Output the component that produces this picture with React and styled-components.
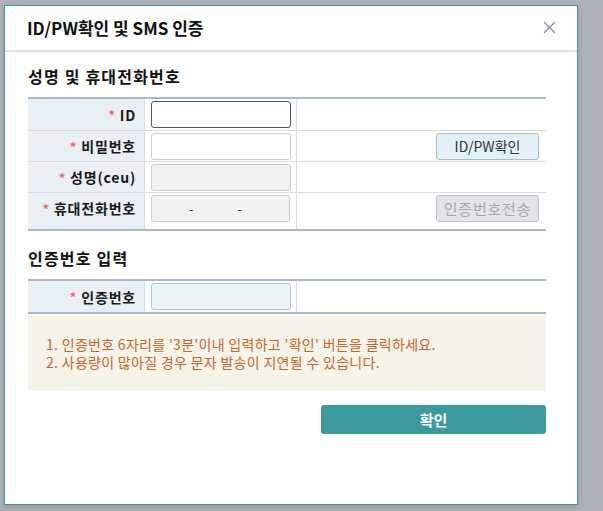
import React from 'react';
import styled, { createGlobalStyle } from 'styled-components';

const GlobalStyle = createGlobalStyle`
  html, body {
    margin: 0;
    padding: 0;
    background: #adb1b7;
  }
  body {
    font-family: "Noto Sans CJK KR", "Noto Sans", sans-serif;
  }
  * { box-sizing: border-box; }
`;

const Backdrop = styled.div`
  width: 603px;
  height: 511px;
  padding: 5px 0 0 4px;
  overflow: hidden;
`;

const Modal = styled.div`
  width: 574px;
  height: 500px;
  background: #fff;
  border: 1px solid #3a9c9c;
  box-shadow: 0 3px 5px rgba(0, 0, 0, 0.12);
  display: flex;
  flex-direction: column;
`;

const Header = styled.div`
  height: 46px;
  border-bottom: 2px solid #e2e2e2;
  display: flex;
  align-items: center;
  justify-content: space-between;
  padding: 0 21px 2px 22px;
`;

const Title = styled.h1`
  margin: 0;
  font-size: 17px;
  font-weight: 700;
  color: #111;
`;

const CloseButton = styled.button`
  border: 0;
  background: none;
  padding: 0;
  width: 13px;
  height: 13px;
  display: flex;
  cursor: pointer;
`;

const Body = styled.div`
  padding: 13px 31px 0 23px;
  display: flex;
  flex-direction: column;
`;

const SectionTitle = styled.h2`
  margin: ${(p) => (p.$first ? '0' : '16px')} 0 10px;
  height: 22px;
  line-height: 22px;
  font-size: 16px;
  font-weight: 700;
  letter-spacing: 1.2px;
  color: #111;
`;

const Table = styled.div`
  border-top: 2px solid #a9bac3;
  border-bottom: 2px solid #a9bac3;
`;

const Row = styled.div`
  display: grid;
  grid-template-columns: 117px 152px 1fr;
  min-height: ${(p) => (p.$tall ? 37 : 31)}px;
  border-top: ${(p) => (p.$first ? '0' : '1px solid #dcdcdc')};
`;

const LabelCell = styled.div`
  background: #e9eff3;
  border-right: 1px solid #dcdcdc;
  display: flex;
  align-items: center;
  justify-content: flex-end;
  padding: 0 8px ${(p) => (p.$tall ? 6 : 0)}px 0;
  font-size: 14px;
  font-weight: 700;
  letter-spacing: 0.8px;
  color: #1a1a1a;
`;

const Star = styled.span`
  color: #f2646d;
  font-size: 13px;
  margin-right: 4px;
`;

const FieldCell = styled.div`
  border-right: 1px solid #dcdcdc;
  display: flex;
  align-items: center;
  padding: 0 6px ${(p) => (p.$tall ? 6 : 0)}px 6px;
`;

const ActionCell = styled.div`
  display: flex;
  align-items: center;
  justify-content: flex-end;
  padding: 0 7px ${(p) => (p.$tall ? 6 : 0)}px 0;
`;

const Input = styled.input`
  width: 140px;
  height: 27px;
  border: 1px solid ${(p) => (p.$focus ? '#4d5566' : p.$code ? '#a9c4f2' : '#cccccc')};
  border-radius: 3px;
  background: ${(p) => (p.$code ? '#edf4f4' : p.disabled ? '#f2f2f2' : '#fff')};
  font-family: inherit;
  font-size: 13px;
  color: #333;
  padding: 0 6px;
  outline: none;
`;

const PhoneBox = styled.div`
  width: 140px;
  height: 27px;
  border: 1px solid #cccccc;
  border-radius: 3px;
  background: #f2f2f2;
  display: flex;
  align-items: center;
  justify-content: center;
  gap: 44px;
  padding-right: 10px;
  font-size: 13px;
  color: #333;
`;

const SmallButton = styled.button`
  width: 103px;
  height: 27px;
  border-radius: 3px;
  border: 1px solid ${(p) => (p.disabled ? '#bcc5cb' : '#a7bfc8')};
  background: ${(p) => (p.disabled ? '#e1e5e8' : '#e1f1f6')};
  color: ${(p) => (p.disabled ? '#a1a8ad' : '#333')};
  font-family: inherit;
  font-size: ${(p) => (p.disabled ? 15 : 14)}px;
  letter-spacing: ${(p) => (p.disabled ? '0.8px' : '0')};
  padding: 0;
  cursor: pointer;
`;

const Notice = styled.ol`
  margin: 0;
  list-style: none;
  padding: 21px 18px 20px 18px;
  background: #f6f3e8;
  font-size: 14px;
  letter-spacing: 0.3px;
  line-height: 18px;
  color: #c2672e;
`;

const Footer = styled.div`
  display: flex;
  justify-content: flex-end;
  margin-top: 14px;
`;

const SubmitButton = styled.button`
  width: 225px;
  height: 29px;
  border: 0;
  border-radius: 3px;
  background: #3a9a9e;
  color: #fff;
  font-family: inherit;
  font-size: 15px;
  font-weight: 700;
  cursor: pointer;
`;

const CloseIcon = () => (
  <svg width="13" height="13" viewBox="0 0 13 13">
    <path d="M1 1 L12 12 M12 1 L1 12" stroke="#7f8ba5" strokeWidth="1.3" fill="none" />
  </svg>
);

const Label = ({ children, tall }) => (
  <LabelCell $tall={tall}>
    <Star>*</Star>
    {children}
  </LabelCell>
);

export default function App() {
  return (
    <>
      <GlobalStyle />
      <Backdrop>
        <Modal>
          <Header>
            <Title>ID/PW확인 및 SMS 인증</Title>
            <CloseButton aria-label="닫기">
              <CloseIcon />
            </CloseButton>
          </Header>
          <Body>
            <SectionTitle $first>성명 및 휴대전화번호</SectionTitle>
            <Table>
              <Row $first>
                <Label>ID</Label>
                <FieldCell>
                  <Input $focus />
                </FieldCell>
                <ActionCell />
              </Row>
              <Row>
                <Label>비밀번호</Label>
                <FieldCell>
                  <Input type="password" />
                </FieldCell>
                <ActionCell>
                  <SmallButton>ID/PW확인</SmallButton>
                </ActionCell>
              </Row>
              <Row>
                <Label>성명(ceu)</Label>
                <FieldCell>
                  <Input disabled />
                </FieldCell>
                <ActionCell />
              </Row>
              <Row $tall>
                <Label tall>휴대전화번호</Label>
                <FieldCell $tall>
                  <PhoneBox>
                    <span>-</span>
                    <span>-</span>
                  </PhoneBox>
                </FieldCell>
                <ActionCell $tall>
                  <SmallButton disabled>인증번호전송</SmallButton>
                </ActionCell>
              </Row>
            </Table>

            <SectionTitle>인증번호 입력</SectionTitle>
            <Table>
              <Row $first>
                <Label>인증번호</Label>
                <FieldCell>
                  <Input $code />
                </FieldCell>
                <ActionCell />
              </Row>
            </Table>
            <Notice>
              <li>1. 인증번호 6자리를 '3분'이내 입력하고 '확인' 버튼을 클릭하세요.</li>
              <li>2. 사용량이 많아질 경우 문자 발송이 지연될 수 있습니다.</li>
            </Notice>
            <Footer>
              <SubmitButton>확인</SubmitButton>
            </Footer>
          </Body>
        </Modal>
      </Backdrop>
    </>
  );
}
